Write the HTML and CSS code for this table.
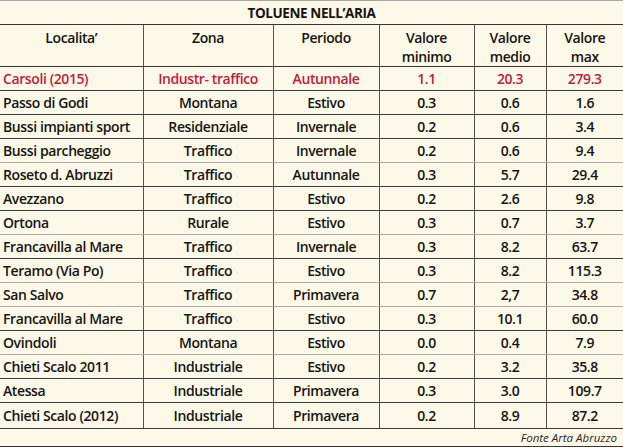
FILE: index.html
```html
<!DOCTYPE html>
<html lang="it">
<head>
<meta charset="utf-8">
<title>Toluene nell'aria</title>
<link rel="stylesheet" href="styles.css">
</head>
<body>
<div class="sheet">
  <div class="top-rule"></div>
  <div class="title">TOLUENE NELL’ARIA</div>
  <table class="data">
    <colgroup>
      <col class="c1"><col class="c2"><col class="c3"><col class="c4"><col class="c5"><col class="c6">
    </colgroup>
    <thead>
      <tr>
        <th>Localita’</th>
        <th>Zona</th>
        <th>Periodo</th>
        <th>Valore<br>minimo</th>
        <th>Valore<br>medio</th>
        <th>Valore<br>max</th>
      </tr>
    </thead>
    <tbody>
      <tr class="red dark"><td>Carsoli (2015)</td><td>Industr- traffico</td><td>Autunnale</td><td>1.1</td><td>20.3</td><td>279.3</td></tr>
      <tr class="dark"><td>Passo di Godi</td><td>Montana</td><td>Estivo</td><td>0.3</td><td>0.6</td><td>1.6</td></tr>
      <tr class="dark"><td>Bussi impianti sport</td><td>Residenziale</td><td>Invernale</td><td>0.2</td><td>0.6</td><td>3.4</td></tr>
      <tr class="light"><td>Bussi parcheggio</td><td>Traffico</td><td>Invernale</td><td>0.2</td><td>0.6</td><td>9.4</td></tr>
      <tr class="dark"><td>Roseto d. Abruzzi</td><td>Traffico</td><td>Autunnale</td><td>0.3</td><td>5.7</td><td>29.4</td></tr>
      <tr class="dark"><td>Avezzano</td><td>Traffico</td><td>Estivo</td><td>0.2</td><td>2.6</td><td>9.8</td></tr>
      <tr class="light"><td>Ortona</td><td>Rurale</td><td>Estivo</td><td>0.3</td><td>0.7</td><td>3.7</td></tr>
      <tr class="dark"><td>Francavilla al Mare</td><td>Traffico</td><td>Invernale</td><td>0.3</td><td>8.2</td><td>63.7</td></tr>
      <tr class="light"><td>Teramo (Via Po)</td><td>Traffico</td><td>Estivo</td><td>0.3</td><td>8.2</td><td>115.3</td></tr>
      <tr class="light"><td>San Salvo</td><td>Traffico</td><td>Primavera</td><td>0.7</td><td>2,7</td><td>34.8</td></tr>
      <tr class="dark"><td>Francavilla al Mare</td><td>Traffico</td><td>Estivo</td><td>0.3</td><td>10.1</td><td>60.0</td></tr>
      <tr class="light"><td>Ovindoli</td><td>Montana</td><td>Estivo</td><td>0.0</td><td>0.4</td><td>7.9</td></tr>
      <tr class="dark"><td>Chieti Scalo 2011</td><td>Industriale</td><td>Estivo</td><td>0.2</td><td>3.2</td><td>35.8</td></tr>
      <tr class="dark"><td>Atessa</td><td>Industriale</td><td>Primavera</td><td>0.3</td><td>3.0</td><td>109.7</td></tr>
      <tr class="none last"><td>Chieti Scalo (2012)</td><td>Industriale</td><td>Primavera</td><td>0.2</td><td>8.9</td><td>87.2</td></tr>
    </tbody>
  </table>
  <div class="source">Fonte Arta Abruzzo</div>
  <div class="bottom-rule"></div>
</div>
</body>
</html>
```

FILE: styles.css
```css
html, body {
  margin: 0;
  padding: 0;
  background: #fcf9e8;
}

.sheet {
  width: 623px;
  height: 447px;
  font-family: "Open Sans", Lato, "Liberation Sans", sans-serif;
  font-weight: 600;
  letter-spacing: -0.4px;
  color: #161411;
  display: flex;
  flex-direction: column;
}

.top-rule {
  height: 2px;
  background: #a9a59c;
}

.title {
  height: 23px;
  line-height: 25px;
  text-align: center;
  font-size: 13.5px;
  font-weight: 700;
}

.data {
  width: 623px;
  table-layout: fixed;
  border-collapse: collapse;
  font-size: 14px;
}

.c1 { width: 143px; }
.c2 { width: 130px; }
.c3 { width: 106px; }
.c4 { width: 95px; }
.c5 { width: 72px; }
.c6 { width: 77px; }

.data th {
  font-weight: 600;
  vertical-align: top;
  height: 38px;
  padding: 3px 0 0 0;
  box-sizing: border-box;
  line-height: 19px;
  text-align: center;
  border-top: 1px solid #3a3632;
  border-bottom: 1px solid #3a3632;
  font-size: 14px;
}

.data td {
  height: 23px;
  padding: 0;
  text-align: center;
  line-height: 23px;
  white-space: nowrap;
  overflow: hidden;
}

.data th + th,
.data td + td {
  border-left: 1px solid #55514b;
}

.data td:first-child {
  text-align: left;
  padding-left: 3px;
}

.data tr.dark td { border-bottom: 1px solid #3e3a35; }
.data tr.light td { border-bottom: 1px solid #b0aca2; }
.data tr.none td { border-bottom: 0; }
.data tr.last td { border-bottom: 1px solid #3e3a35; height: 25px; }

.data tr.red td { color: #c41a3c; }

.source {
  height: 17px;
  line-height: 18px;
  text-align: right;
  padding-right: 6px;
  font-family: "Open Sans", "Liberation Sans", sans-serif;
  font-style: italic;
  font-weight: 400;
  letter-spacing: 0;
  font-size: 11.5px;
  color: #2a2723;
}

.bottom-rule {
  height: 2px;
  background: #3a3632;
}
```
